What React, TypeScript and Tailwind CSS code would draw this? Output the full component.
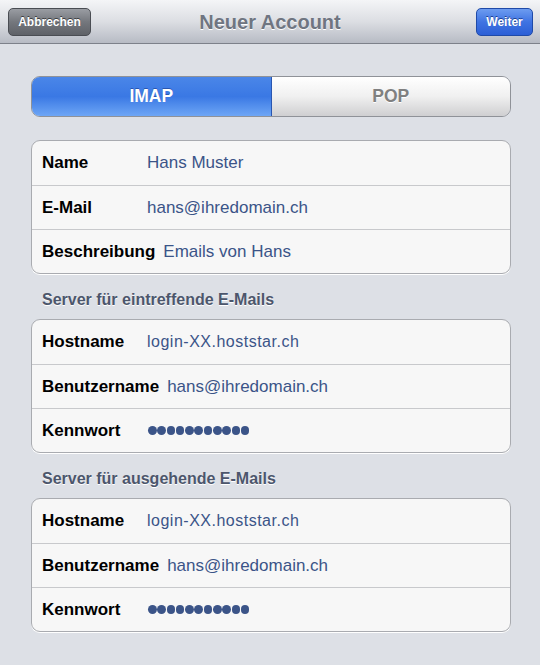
import React from 'react'

type Row = { label: string; value?: string; password?: boolean; host?: boolean }

const account: Row[] = [
  { label: 'Name', value: 'Hans Muster' },
  { label: 'E-Mail', value: 'hans@ihredomain.ch' },
  { label: 'Beschreibung', value: 'Emails von Hans' },
]

const server: Row[] = [
  { label: 'Hostname', value: 'login-XX.hoststar.ch', host: true },
  { label: 'Benutzername', value: 'hans@ihredomain.ch' },
  { label: 'Kennwort', password: true },
]

function Dots() {
  return (
    <div className="flex items-center gap-[0.7px] pl-[1px]">
      {Array.from({ length: 11 }).map((_, i) => (
        <span key={i} className="block w-[8.6px] h-[8.6px] rounded-full bg-[#3b5488]" />
      ))}
    </div>
  )
}

function Group({ rows }: { rows: Row[] }) {
  return (
    <div className="ml-[31px] mr-[29px] rounded-[9px] border border-[#a9abb0] bg-[#f7f7f7] overflow-hidden shadow-[0_1px_0_#fff]">
      {rows.map((r, i) => (
        <div
          key={r.label}
          className={`flex items-center h-[44px] pl-[10px] ${i > 0 ? 'border-t border-[#c8c9cc]' : ''}`}
        >
          <span className="shrink-0 min-w-[105px] pr-[8px] text-[17px] font-bold text-black">{r.label}</span>
          {r.password ? (
            <Dots />
          ) : (
            <span
              className={`${r.host ? 'text-[16px] tracking-[0.5px]' : 'text-[17px]'} text-[#3b5488]`}
            >
              {r.value}
            </span>
          )}
        </div>
      ))}
    </div>
  )
}

function SectionHeader({ children }: { children: React.ReactNode }) {
  return (
    <div className="px-[42px] pt-[14px] pb-[7px] text-[16px] leading-6 font-bold text-[#4c566c] [text-shadow:0_1px_0_#fff]">
      {children}
    </div>
  )
}

export default function App() {
  return (
    <div className="w-[540px] h-[665px] overflow-hidden bg-[#dde0e6] font-['Liberation_Sans',Arial,sans-serif]">
      {/* Navigationsleiste */}
      <div className="relative flex items-center justify-between h-[44px] px-[8px] bg-gradient-to-b from-[#f4f5f7] via-[#dcdee3] to-[#b7bbc4] border-b border-[#7d818a]">
        <button className="h-[28px] w-[83px] rounded-[5px] border border-[#4a4d53] bg-gradient-to-b from-[#9a9da3] via-[#74777d] to-[#5f6268] text-[12px] font-bold text-white [text-shadow:0_-1px_0_#3a3c40]">
          Abbrechen
        </button>
        <h1 className="absolute left-0 right-0 text-center text-[20px] font-bold text-[#6f7581] [text-shadow:0_1px_0_#fff] pointer-events-none">
          Neuer Account
        </h1>
        <button className="mr-[-1px] h-[28px] w-[57px] rounded-[5px] border border-[#1f4aa8] bg-gradient-to-b from-[#6d9cf0] via-[#3f73e2] to-[#2c5fd6] text-[12px] font-bold text-white [text-shadow:0_-1px_0_#1c3f90]">
          Weiter
        </button>
      </div>

      {/* IMAP / POP */}
      <div className="ml-[31px] mr-[29px] mt-[32px] flex h-[41px] rounded-[9px] border border-[#8f9298] overflow-hidden">
        <div className="flex-1 flex items-center justify-center bg-gradient-to-b from-[#4a86e8] via-[#3a78e4] to-[#6ea6f5] border-r border-[#2a56b0] text-[17.5px] font-bold text-white [text-shadow:0_-1px_0_#2a56b0]">
          IMAP
        </div>
        <div className="flex-1 flex items-center justify-center bg-gradient-to-b from-[#ffffff] via-[#f0f0f0] to-[#cfcfd1] text-[17.5px] font-bold text-[#808080] [text-shadow:0_1px_0_#fff]">
          POP
        </div>
      </div>

      <div className="mt-[23px]">
        <Group rows={account} />
      </div>

      <SectionHeader>Server für eintreffende E-Mails</SectionHeader>
      <Group rows={server} />

      <SectionHeader>Server für ausgehende E-Mails</SectionHeader>
      <Group rows={server} />
    </div>
  )
}
